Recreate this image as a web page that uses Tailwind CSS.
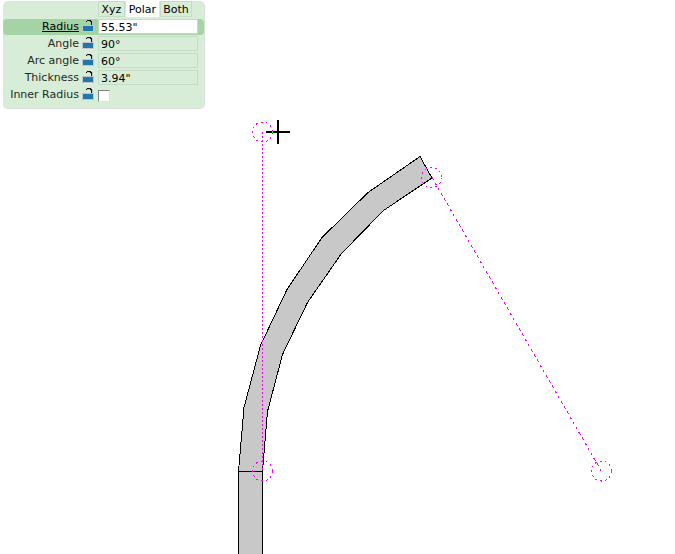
<!DOCTYPE html>
<html lang="en">
<head>
<meta charset="utf-8">
<title>Curved wall</title>
<script src="https://cdn.jsdelivr.net/npm/@tailwindcss/browser@4"></script>
</head>
<body class="relative min-h-screen overflow-hidden bg-white font-['DejaVu_Sans',Verdana,sans-serif] text-[11px] leading-[15px] text-[#1c2b1c]">
<!-- Drawing canvas -->
<svg class="absolute inset-0 h-full w-full" shape-rendering="crispEdges" role="img" aria-label="Wall plan">
  <g fill="#c8c8c8" stroke="#000" stroke-width="1">
    <path d="M238.5 471.5L244 407.5L260.5 345.5L287 289.5L322 237.5L368 192.5L420 156.5L432 178L383.5 210.5L341.500 253.500L307.500 302.500L282.500 354.500L267.500 411.500L262.500 471.500Z"/>
    <path d="M238.5 471.5H262.500V2000H238.500Z"/>
  </g>
  <g fill="none" stroke="#f0f" stroke-width="1">
    <path d="M262.500 132V471" stroke-dasharray="2 2"/>
    <path d="M432 177.500L601 470.500" stroke-dasharray="3 3"/>
    <g stroke-dasharray="2 3">
      <circle cx="262.500" cy="132" r="10"/>
      <circle cx="262.500" cy="471" r="10"/>
      <circle cx="431.500" cy="177.500" r="10"/>
      <circle cx="601.500" cy="471" r="10"/>
    </g>
  </g>
  <path d="M266 132H290M278 120V144" stroke="#000" stroke-width="2"/>
  <path d="M272 131h1v2h-1z" fill="#0f0"/>
</svg>
<svg class="hidden">
  <symbol id="lock" viewBox="0 0 12 12">
    <path d="M4 0h6v1h1v4h1v7H0V5h9V3H8V2H4z" fill="#c4c4cc"/>
    <path d="M4 1h1v1H4zM5 0h4v1H5zM8 1h2v1H8zM9 2h1v3H9z" fill="#111"/>
    <path d="M1 6h10v5H1z" fill="#2277aa"/>
  </symbol>
</svg>
<!-- Properties panel -->
<form class="relative ml-[3px] mt-px w-fit rounded-[5px] border-r border-b border-[#d9e3d9] bg-[#d8edd8] pb-1">
  <div class="flex h-[18px] gap-px pl-[95px] text-black">
    <button type="button" class="h-4 w-[27px] border border-[#c3dcc3] text-center leading-4">Xyz</button>
    <button type="button" class="h-4 w-[33px] bg-white text-center leading-[18px]" aria-pressed="true">Polar</button>
    <button type="button" class="h-4 w-[32px] border border-[#c3dcc3] text-center leading-4">Both</button>
  </div>
  <div class="mb-px flex h-4 items-start rounded-[4px] bg-[#a5d3a5] pr-[6px]">
    <label for="radius" class="w-[76px] text-right text-black underline">Radius</label>
    <svg class="mt-px ml-[3px] mr-1 h-3 w-3" shape-rendering="crispEdges" aria-hidden="true"><use href="#lock"/></svg>
    <input id="radius" value='55.53"' class="h-[15px] w-[100px] border border-[#c3dcc3] bg-white px-[2px] pt-px text-black">
  </div>
  <div class="flex h-[17px] items-start pr-[6px]">
    <label for="angle" class="w-[76px] text-right">Angle</label>
    <svg class="mt-px ml-[3px] mr-1 h-3 w-3" shape-rendering="crispEdges" aria-hidden="true"><use href="#lock"/></svg>
    <input id="angle" value="90°" class="h-[15px] w-[100px] border border-[#c3dcc3] px-[2px] pt-px text-black">
  </div>
  <div class="flex h-[17px] items-start pr-[6px]">
    <label for="arc" class="w-[76px] text-right">Arc angle</label>
    <svg class="mt-px ml-[3px] mr-1 h-3 w-3" shape-rendering="crispEdges" aria-hidden="true"><use href="#lock"/></svg>
    <input id="arc" value="60°" class="h-[15px] w-[100px] border border-[#c3dcc3] px-[2px] pt-px text-black">
  </div>
  <div class="flex h-[17px] items-start pr-[6px]">
    <label for="thickness" class="w-[76px] text-right">Thickness</label>
    <svg class="mt-px ml-[3px] mr-1 h-3 w-3" shape-rendering="crispEdges" aria-hidden="true"><use href="#lock"/></svg>
    <input id="thickness" value='3.94"' class="h-[15px] w-[100px] border border-[#c3dcc3] px-[2px] pt-px text-black">
  </div>
  <div class="flex h-[17px] items-start pr-[6px]">
    <label for="inner" class="w-[76px] whitespace-nowrap text-right">Inner Radius</label>
    <svg class="mt-px ml-[3px] mr-1 h-3 w-3" shape-rendering="crispEdges" aria-hidden="true"><use href="#lock"/></svg>
    <input id="inner" type="checkbox" class="mt-[3px] h-3 w-3 appearance-none border border-t-[#808080] border-r-[#e0e0e0] border-b-[#e0e0e0] border-l-[#808080] bg-white">
  </div>
</form>
</body>
</html>
